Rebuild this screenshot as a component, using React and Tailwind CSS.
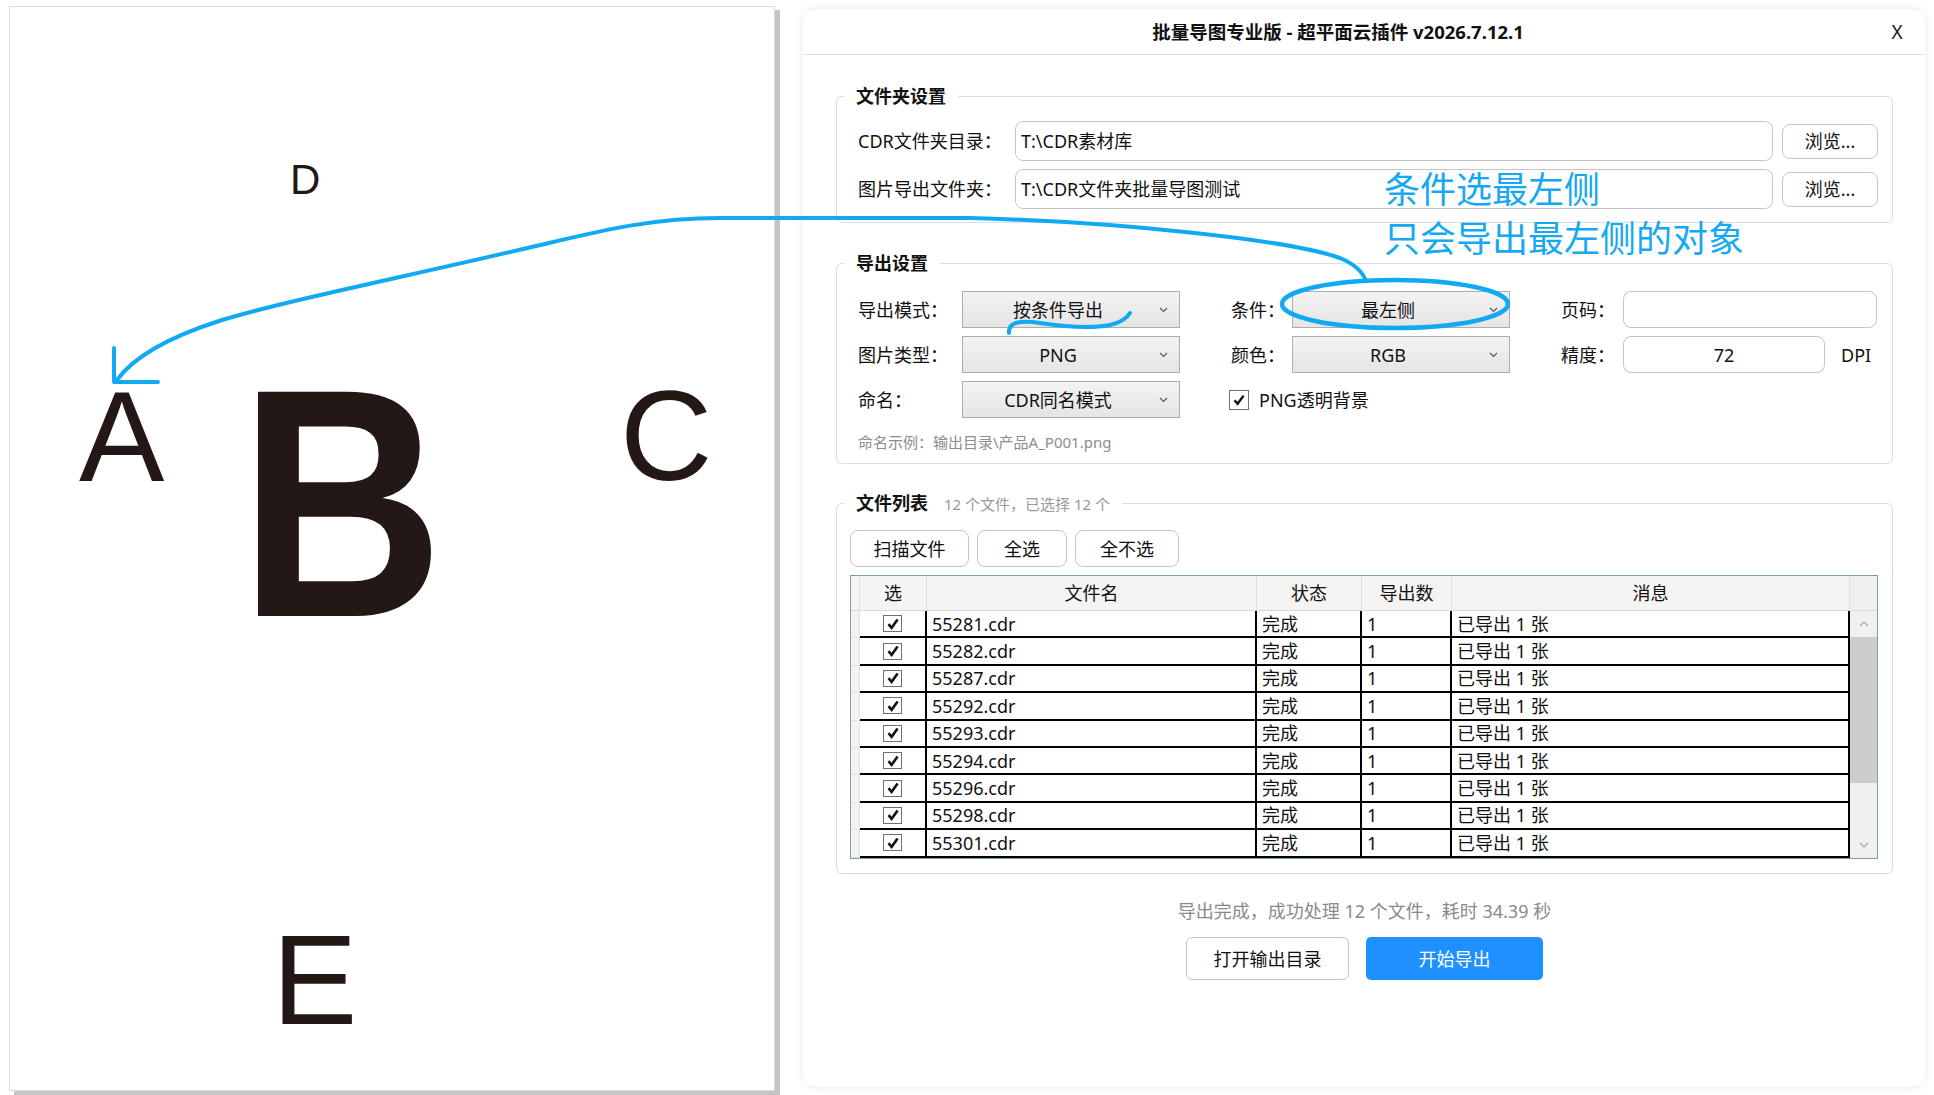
import React from "react";

const files = ["55281", "55282", "55287", "55292", "55293", "55294", "55296", "55298", "55301", "55302", "55305", "55308"];

function Chevron() {
  return (
    <svg width="9" height="6" viewBox="0 0 9 6">
      <path d="M1 1L4.5 4.5L8 1" fill="none" stroke="#5a5a5a" strokeWidth="1.2" />
    </svg>
  );
}

function Select({ value }) {
  return (
    <div className="w-[218px] h-[37px] flex items-center border border-[#adadad] bg-linear-to-b from-[#f3f3f3] to-[#e5e5e5]">
      <span className="flex-1 text-center text-[18px] leading-[24px] text-[#111]">{value}</span>
      <span className="w-[26px] pl-[6px] flex items-center">
        <Chevron />
      </span>
    </div>
  );
}

function Check({ size = 14, box = "w-[20px] h-[20px]", sw = 2.4 }) {
  return (
    <span className={`${box} border border-[#707070] bg-white flex items-center justify-center shrink-0`}>
      <svg width={size} height={size} viewBox="0 0 14 14">
        <path d="M2.5 7.2L5.6 10.8L11.6 2.6" fill="none" stroke="#111" strokeWidth={sw} />
      </svg>
    </span>
  );
}

function Label({ w, children }) {
  return <span className={`${w} shrink-0 text-[18px] leading-[24px] text-[#111]`}>{children}</span>;
}

function Btn({ w, children }) {
  return (
    <button className={`${w} h-[37px] rounded-[8px] border border-[#c6c6c6] bg-white text-[18px] leading-[24px] text-[#111]`}>
      {children}
    </button>
  );
}

export default function App() {
  return (
    <div className="relative w-[1934px] h-[1095px] bg-white flex items-start overflow-hidden font-['Noto_Sans','Noto_Sans_CJK_SC',sans-serif]">
      {/* Canvas page */}
      <div className="relative ml-[9px] mt-[6px] w-[766px] h-[1085px] shrink-0 border border-[#d8dce3] bg-white shadow-[5px_4px_0_#c4c4c4] font-['Liberation_Sans',Arial,sans-serif] text-[#231815] leading-none">
        <span className="absolute left-[280px] top-[152px] text-[42px]">D</span>
        <span className="absolute left-[69px] top-[366px] text-[128px]">A</span>
        <span className="absolute left-[229px] top-[333px] text-[326px] font-bold scale-x-[0.87] origin-left">B</span>
        <span className="absolute left-[610px] top-[365px] text-[128px]">C</span>
        <span className="absolute left-[262px] top-[909px] text-[128px]">E</span>
      </div>

      {/* Dialog window */}
      <div className="ml-[28px] mt-[9px] w-[1122px] h-[1078px] shrink-0 rounded-[14px] bg-white shadow-[0_0_10px_rgba(0,0,0,0.10)] overflow-hidden flex flex-col">
        <div className="h-[46px] shrink-0 flex items-center border-b border-[#dcdfe3]">
          <div className="flex-1 text-center text-[18.5px] leading-[24px] font-bold text-[#111]">
            批量导图专业版 - 超平面云插件 v2026.7.12.1
          </div>
          <div className="w-[52px] pr-[4px] text-center text-[19px] leading-[24px] text-[#222]">X</div>
        </div>

        <div className="pt-[29px] pl-[33px] pr-[32px] flex flex-col">
          {/* Folder settings */}
          <fieldset className="border border-[#d6dee8] rounded-[6px]">
            <legend className="ml-[7px] px-[12px] text-[18px] leading-[24px] font-bold text-[#111]">文件夹设置</legend>
            <div className="pt-[13px] pl-[21px] pr-[14px] pb-[13px] flex flex-col gap-[8px]">
              {[
                ["CDR文件夹目录：", "T:\\CDR素材库"],
                ["图片导出文件夹：", "T:\\CDR文件夹批量导图测试"],
              ].map(([l, v]) => (
                <div key={l} className="flex items-center h-[40px]">
                  <Label w="w-[157px]">{l}</Label>
                  <div className="flex-1 h-[40px] rounded-[8px] border border-[#c6c6c6] bg-white flex items-center pl-[5px] text-[18px] leading-[24px] text-[#111]">
                    {v}
                  </div>
                  <button className="ml-[9px] w-[96px] h-[35px] rounded-[8px] border border-[#c6c6c6] bg-white text-[18px] leading-[24px] text-[#111]">
                    浏览...
                  </button>
                </div>
              ))}
            </div>
          </fieldset>

          {/* Export settings */}
          <fieldset className="mt-[28px] border border-[#d6dee8] rounded-[6px]">
            <legend className="ml-[7px] px-[12px] text-[18px] leading-[24px] font-bold text-[#111]">导出设置</legend>
            <div className="pt-[16px] pl-[21px] pr-[14px] pb-[11px] flex flex-col">
              <div className="flex items-center h-[37px]">
                <Label w="w-[104px]">导出模式：</Label>
                <Select value="按条件导出" />
                <Label w="ml-[51px] w-[61px]">条件：</Label>
                <Select value="最左侧" />
                <Label w="ml-[51px] w-[62px]">页码：</Label>
                <div className="w-[254px] h-[37px] rounded-[8px] border border-[#c6c6c6] bg-white" />
              </div>
              <div className="mt-[8px] flex items-center h-[37px]">
                <Label w="w-[104px]">图片类型：</Label>
                <Select value="PNG" />
                <Label w="ml-[51px] w-[61px]">颜色：</Label>
                <Select value="RGB" />
                <Label w="ml-[51px] w-[62px]">精度：</Label>
                <div className="w-[202px] h-[37px] rounded-[8px] border border-[#c6c6c6] bg-white flex items-center justify-center text-[18px] leading-[24px] text-[#111]">
                  72
                </div>
                <span className="ml-[16px] text-[18px] leading-[24px] text-[#111]">DPI</span>
              </div>
              <div className="mt-[8px] flex items-center h-[37px]">
                <Label w="w-[104px]">命名：</Label>
                <Select value="CDR同名模式" />
                <span className="ml-[49px]">
                  <Check />
                </span>
                <span className="ml-[10px] text-[18px] leading-[24px] text-[#111]">PNG透明背景</span>
              </div>
              <div className="mt-[14px] text-[15px] leading-[20px] text-[#8c8c8c]">命名示例：输出目录\产品A_P001.png</div>
            </div>
          </fieldset>

          {/* File list */}
          <fieldset className="mt-[27px] border border-[#d6dee8] rounded-[6px]">
            <legend className="ml-[7px] px-[12px] text-[18px] leading-[24px] text-[#111]">
              <span className="font-bold">文件列表</span>
              <span className="ml-[16px] text-[15px] text-[#999]">12 个文件，已选择 12 个</span>
            </legend>
            <div className="pt-[14px] pl-[13px] pr-[14px] pb-[14px] flex flex-col">
              <div className="flex gap-[8px]">
                <Btn w="w-[119px]">扫描文件</Btn>
                <Btn w="w-[90px]">全选</Btn>
                <Btn w="w-[104px]">全不选</Btn>
              </div>
              <div className="mt-[8px] h-[284px] border border-[#7f9db9] flex flex-col overflow-hidden text-[18px] text-[#111]">
                <div className="h-[35px] shrink-0 flex bg-[#f4f4f4] border-b border-[#d9d9d9]">
                  <div className="w-[9px] border-r border-[#e2e2e2]" />
                  <div className="w-[67px] border-r border-[#dddddd] flex items-center justify-center">选</div>
                  <div className="w-[330px] border-r border-[#dddddd] flex items-center justify-center">文件名</div>
                  <div className="w-[105px] border-r border-[#dddddd] flex items-center justify-center">状态</div>
                  <div className="w-[90px] border-r border-[#dddddd] flex items-center justify-center">导出数</div>
                  <div className="w-[398px] border-r border-[#dddddd] flex items-center justify-center">消息</div>
                  <div className="w-[27px] bg-[#f0f0f0]" />
                </div>
                <div className="flex flex-1 min-h-0">
                  <div className="w-[999px] h-[247px] overflow-hidden">
                    {files.map((f) => (
                      <div key={f} className="h-[27.4px] flex">
                        <div className="w-[9px] bg-[#f2f2f2] border-b border-r border-[#e2e2e2]" />
                        <div className="flex flex-1 border-b-2 border-black leading-[24px]">
                          <div className="w-[67px] border-r-2 border-black flex items-center justify-center">
                            <Check size={14} box="w-[19px] h-[17px]" sw={2.6} />
                          </div>
                          <div className="w-[330px] border-r-2 border-black flex items-center pl-[5px]">{f}.cdr</div>
                          <div className="w-[105px] border-r-2 border-black flex items-center pl-[5px]">完成</div>
                          <div className="w-[90px] border-r-2 border-black flex items-center pl-[5px]">1</div>
                          <div className="w-[398px] border-r-2 border-black flex items-center pl-[5px]">已导出 1 张</div>
                        </div>
                      </div>
                    ))}
                  </div>
                  <div className="w-[27px] bg-[#f0f0f0] flex flex-col">
                    <div className="h-[26px] flex items-center justify-center">
                      <svg width="10" height="6" viewBox="0 0 10 6">
                        <path d="M1 5L5 1L9 5" fill="none" stroke="#a6a6a6" strokeWidth="1.2" />
                      </svg>
                    </div>
                    <div className="h-[146px] bg-[#cdcdcd]" />
                    <div className="flex-1" />
                    <div className="h-[26px] flex items-center justify-center">
                      <svg width="10" height="6" viewBox="0 0 10 6">
                        <path d="M1 1L5 5L9 1" fill="none" stroke="#a6a6a6" strokeWidth="1.2" />
                      </svg>
                    </div>
                  </div>
                </div>
              </div>
            </div>
          </fieldset>

          <div className="mt-[25px] text-center text-[18px] leading-[24px] text-[#8a8a8a]">
            导出完成，成功处理 12 个文件，耗时 34.39 秒
          </div>
          <div className="mt-[14px] flex justify-center gap-[17px]">
            <button className="w-[163px] h-[43px] rounded-[6px] border border-[#c4c4c4] bg-white text-[18px] leading-[24px] text-[#111]">
              打开输出目录
            </button>
            <button className="w-[177px] h-[43px] rounded-[5px] bg-[#1e90ff] text-white text-[18px] leading-[24px]">
              开始导出
            </button>
          </div>
        </div>
      </div>

      {/* Annotation overlay */}
      <svg className="absolute left-0 top-0 pointer-events-none" width="1934" height="1095" viewBox="0 0 1934 1095">
        <g fill="none" stroke="#10aaf4" strokeWidth="4" strokeLinecap="round" strokeLinejoin="round">
          <path d="M117 380 C130 362 160 340 219 321 C280 302 400 278 536 246 C600 231 650 218 720 218 L970 218 C1120 222 1290 240 1340 258 C1352 263 1362 270 1366 281" />
          <path d="M114 348 L114 382 L158 382" />
          <ellipse cx="1395" cy="304" rx="113" ry="24" strokeWidth="4.5" />
          <path d="M1009 333 C1008 322 1020 320 1040 323 C1060 326 1090 329 1110 325 C1122 322 1127 318 1130 313" />
        </g>
      </svg>
      <div className="absolute left-[1384px] top-[169px] text-[36px] leading-none text-[#16a8f2] font-['Noto_Sans_CJK_SC',sans-serif] whitespace-nowrap">
        条件选最左侧
      </div>
      <div className="absolute left-[1384px] top-[218px] text-[36px] leading-none text-[#16a8f2] font-['Noto_Sans_CJK_SC',sans-serif] whitespace-nowrap">
        只会导出最左侧的对象
      </div>
    </div>
  );
}
